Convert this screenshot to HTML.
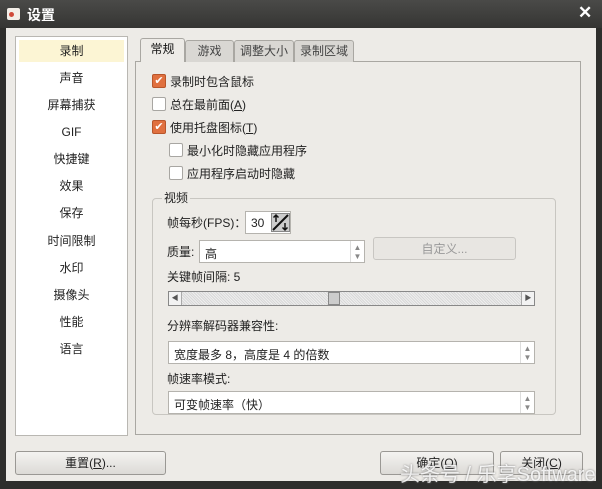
<!DOCTYPE html>
<html><head><meta charset="utf-8"><style>
*{box-sizing:border-box;margin:0;padding:0}
body{width:602px;height:489px;overflow:hidden;background:#2e2e2c;font-family:"Liberation Sans","Noto Sans CJK SC",sans-serif;font-size:12px;color:#222;position:relative}
.a{position:absolute}
.title{left:0;top:0;width:602px;height:28px;background:linear-gradient(#4a4a48,#353533);color:#fff;font-weight:bold;font-size:14px}
.client{left:6px;top:28px;width:590px;height:453px;background:#edebe7}
.side{left:15px;top:36px;width:113px;height:400px;background:#fff;border:1px solid #b9b7b2}
.item{position:absolute;left:3px;width:105px;height:22px;line-height:22px;text-align:center;font-size:12px}
.tab{top:40px;height:22px;line-height:21px;text-align:center;border:1px solid #a9a7a2;border-bottom:none;background:#d9d7d3;border-radius:3px 3px 0 0;color:#444}
.panel{left:135px;top:61px;width:446px;height:374px;border:1px solid #a9a7a2;background:#edebe7}
.cb{width:14px;height:14px;border:1px solid #a8a6a2;border-radius:2px;background:#fff}
.cb.on{background:#e0703f;border-color:#b8552a;color:#fff;font-size:11px;line-height:12px;text-align:center}
.lbl{font-size:12px;white-space:nowrap}
.combo{background:#fff;border:1px solid #b5b3ae}
.arr{position:absolute;right:0;top:0;width:14px;height:100%;border-left:1px solid #ddd;color:#888;font-size:8px;text-align:center;line-height:9px;padding-top:2px}
.btn{border:1px solid #9a9894;border-radius:3px;background:linear-gradient(#f4f3f1,#dcdad6);text-align:center;line-height:22px}
</style></head><body>
<div class="a title"><div class="a" style="left:7px;top:8px;width:13px;height:12px;background:#f3eee8;border-radius:2px"><div class="a" style="left:2px;top:4px;width:5px;height:5px;background:#d04a3a;border-radius:50%"></div></div><span class="a" style="left:27px;top:5px">设置</span><span class="a" style="left:578px;top:3px;font-size:17px">✕</span></div>
<div class="a client"></div>
<div class="a side">
<div class="item" style="top:3px;background:#fcf5d4">录制</div>
<div class="item" style="top:30px">声音</div>
<div class="item" style="top:57px">屏幕捕获</div>
<div class="item" style="top:84px">GIF</div>
<div class="item" style="top:111px">快捷键</div>
<div class="item" style="top:138px">效果</div>
<div class="item" style="top:165px">保存</div>
<div class="item" style="top:193px">时间限制</div>
<div class="item" style="top:220px">水印</div>
<div class="item" style="top:247px">摄像头</div>
<div class="item" style="top:274px">性能</div>
<div class="item" style="top:301px">语言</div>
</div>
<div class="a panel"></div>
<div class="a tab" style="left:185px;width:49px">游戏</div>
<div class="a tab" style="left:234px;width:60px">调整大小</div>
<div class="a tab" style="left:294px;width:60px">录制区域</div>
<div class="a tab" style="left:140px;width:45px;top:38px;height:24px;background:#edebe7;color:#111">常规</div>
<div class="a cb on" style="left:152px;top:74px">✔</div><span class="a lbl" style="left:170px;top:73px">录制时包含鼠标</span>
<div class="a cb" style="left:152px;top:97px"></div><span class="a lbl" style="left:170px;top:96px">总在最前面(<u>A</u>)</span>
<div class="a cb on" style="left:152px;top:120px">✔</div><span class="a lbl" style="left:170px;top:119px">使用托盘图标(<u>T</u>)</span>
<div class="a cb" style="left:169px;top:143px"></div><span class="a lbl" style="left:187px;top:142px">最小化时隐藏应用程序</span>
<div class="a cb" style="left:169px;top:166px"></div><span class="a lbl" style="left:187px;top:165px">应用程序启动时隐藏</span>
<div class="a" style="left:152px;top:198px;width:404px;height:217px;border:1px solid #c8c6c1;border-radius:4px"></div>
<span class="a lbl" style="left:162px;top:189px;background:#edebe7;padding:0 2px">视频</span>
<span class="a lbl" style="left:167px;top:214px">帧每秒(FPS)：</span>
<div class="a combo" style="left:245px;top:211px;width:46px;height:23px"><span class="a" style="left:5px;top:4px">30</span>
<svg class="a" style="left:25px;top:1px" width="19" height="19" viewBox="0 0 19 19"><rect x="0.5" y="0.5" width="18" height="18" fill="#ccc" stroke="#888"/><path d="M2 17L17 2" stroke="#111" stroke-width="2"/><path d="M5 9V2M2.5 4.5L5 2L7.5 4.5M14 10V17M11.5 14.5L14 17L16.5 14.5" stroke="#111" stroke-width="1.5" fill="none"/></svg></div>
<span class="a lbl" style="left:167px;top:243px">质量:</span>
<div class="a combo" style="left:199px;top:240px;width:166px;height:23px"><span class="a" style="left:5px;top:4px">高</span><div class="arr">▲<br>▼</div></div>
<div class="a btn" style="left:373px;top:237px;width:143px;height:23px;color:#999;background:#e8e6e2;border-color:#c8c6c2">自定义...</div>
<span class="a lbl" style="left:167px;top:268px">关键帧间隔: 5</span>
<div class="a" style="left:168px;top:291px;width:367px;height:15px;border:1px solid #888;background:repeating-linear-gradient(45deg,#d8d8d8 0 1px,#eee 1px 2px)">
<div class="a" style="left:0;top:0;width:13px;height:13px;background:#f2f2f2;border-right:1px solid #aaa;font-size:7px;text-align:center;line-height:13px;color:#555">◀</div>
<div class="a" style="left:159px;top:0;width:12px;height:13px;background:#ccc;border:1px solid #888"></div>
<div class="a" style="right:0;top:0;width:13px;height:13px;background:#f2f2f2;border-left:1px solid #aaa;font-size:7px;text-align:center;line-height:13px;color:#555">▶</div></div>
<span class="a lbl" style="left:167px;top:317px">分辨率解码器兼容性:</span>
<div class="a combo" style="left:168px;top:341px;width:367px;height:23px"><span class="a" style="left:5px;top:4px">宽度最多 8，高度是 4 的倍数</span><div class="arr">▲<br>▼</div></div>
<span class="a lbl" style="left:167px;top:370px">帧速率模式:</span>
<div class="a combo" style="left:168px;top:391px;width:367px;height:23px"><span class="a" style="left:5px;top:4px">可变帧速率（快）</span><div class="arr">▲<br>▼</div></div>
<div class="a btn" style="left:15px;top:451px;width:151px;height:24px">重置(<u>R</u>)...</div>
<div class="a btn" style="left:380px;top:451px;width:114px;height:24px">确定(<u>O</u>)</div>
<div class="a btn" style="left:500px;top:451px;width:83px;height:24px">关闭(<u>C</u>)</div>
<span class="a" style="left:400px;top:458px;font-size:20px;color:rgba(255,255,255,0.85);white-space:nowrap;text-shadow:0 0 2px #777">头条号 / 乐享Software</span>
</body></html>
